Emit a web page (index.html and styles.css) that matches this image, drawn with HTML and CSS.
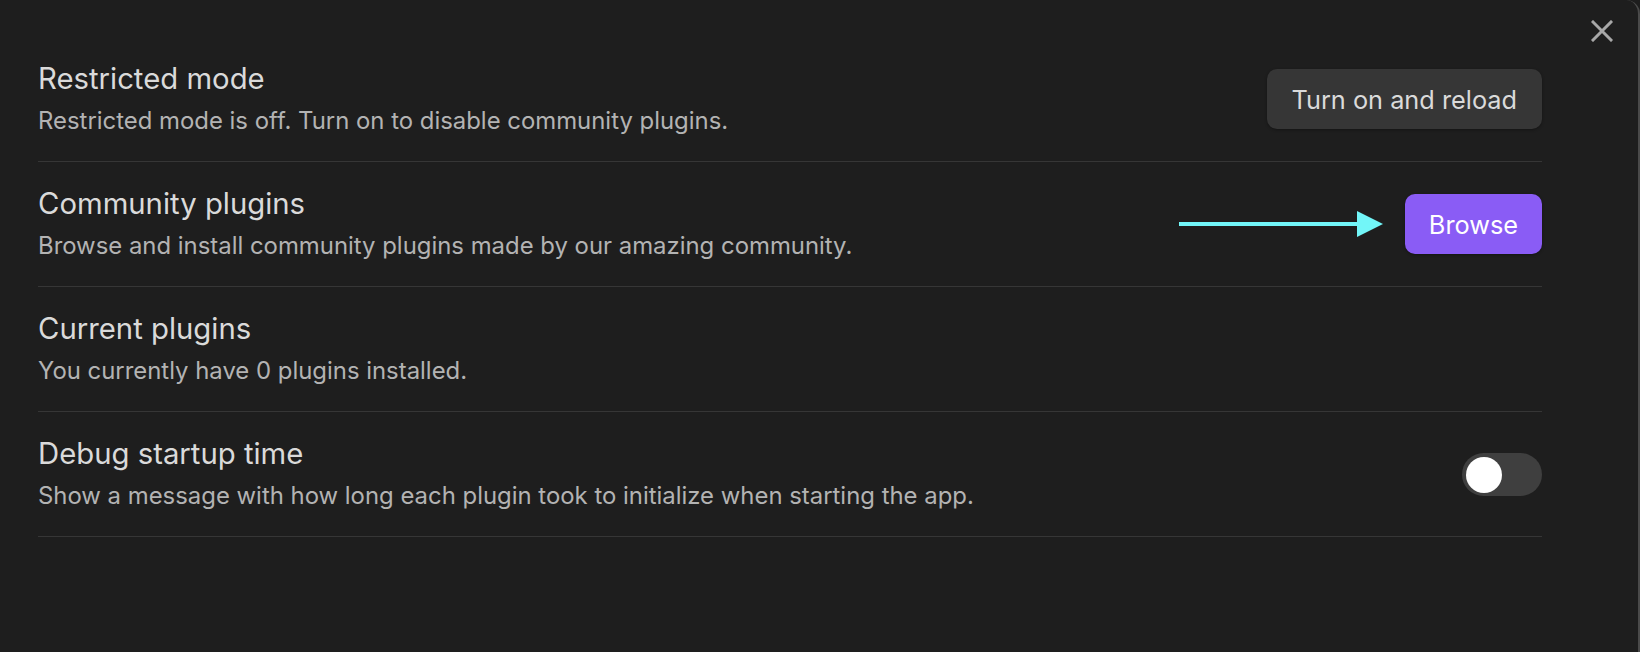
FILE: index.html
```html
<!DOCTYPE html>
<html lang="en">
<head>
<meta charset="utf-8">
<title>Community plugins</title>
<link rel="stylesheet" href="styles.css">
</head>
<body>
<div class="modal">
  <button class="close" aria-label="Close">
    <svg width="22" height="22" viewBox="0 0 22 22"><path d="M2 2 L20 20 M20 2 L2 20" stroke="currentColor" stroke-width="3" stroke-linecap="square" fill="none"/></svg>
  </button>
  <div class="settings">
    <div class="item">
      <div class="info">
        <div class="name">Restricted mode</div>
        <div class="desc">Restricted mode is off. Turn on to disable community plugins.</div>
      </div>
      <div class="control">
        <button class="btn">Turn on and reload</button>
      </div>
    </div>
    <div class="item">
      <div class="info">
        <div class="name">Community plugins</div>
        <div class="desc">Browse and install community plugins made by our amazing community.</div>
      </div>
      <div class="control">
        <svg class="arrow" width="204" height="26" viewBox="0 0 204 26"><rect x="0" y="11" width="182" height="4" fill="#72f6f8"/><polygon points="178,0 204,13 178,26" fill="#72f6f8"/></svg>
        <button class="btn btn-accent">Browse</button>
      </div>
    </div>
    <div class="item">
      <div class="info">
        <div class="name">Current plugins</div>
        <div class="desc">You currently have 0 plugins installed.</div>
      </div>
    </div>
    <div class="item">
      <div class="info">
        <div class="name">Debug startup time</div>
        <div class="desc">Show a message with how long each plugin took to initialize when starting the app.</div>
      </div>
      <div class="control">
        <div class="toggle"><span class="knob"></span></div>
      </div>
    </div>
  </div>
</div>
</body>
</html>
```

FILE: styles.css
```css
html, body {
  margin: 0;
  padding: 0;
  background: #1e1e1e;
}
body {
  font-family: Inter, "Noto Sans", "Liberation Sans", sans-serif;
  -webkit-font-smoothing: antialiased;
}
.modal {
  position: relative;
  box-sizing: border-box;
  min-height: 100vh;
  background: #1e1e1e;
  border-right: 2px solid #4a4a4a;
  border-top-right-radius: 14px;
}
.close {
  position: absolute;
  top: 20px;
  right: 25px;
  width: 22px;
  height: 22px;
  padding: 0;
  border: 0;
  background: none;
  color: #a8a8a8;
  display: flex;
}
.settings {
  padding: 37px 96px 0 38px;
}
.item {
  display: flex;
  align-items: center;
  padding: 24px 0;
  border-bottom: 1px solid #363636;
}
.info {
  flex: 1;
}
.name {
  font-size: 29.3px;
  line-height: 36px;
  color: #dadada;
}
.desc {
  margin-top: 8px;
  font-size: 23.9px;
  line-height: 32px;
  color: #b3b3b3;
}
.control {
  display: flex;
  align-items: center;
  gap: 22px;
}
.btn {
  font-family: Inter, "Noto Sans", sans-serif;
  font-size: 25.3px;
  height: 60px;
  padding: 0 25px;
  border: 0;
  border-radius: 10px;
  background: #363636;
  color: #dadada;
  box-shadow: 0 1px 3px rgba(0,0,0,0.35);
}
.btn-accent {
  background: #8a5cf5;
  color: #ffffff;
  padding: 0 24px;
}
.arrow {
  display: block;
}
.toggle {
  position: relative;
  width: 80px;
  height: 43px;
  border-radius: 22px;
  background: #3f3f3f;
}
.knob {
  position: absolute;
  left: 4px;
  top: 4px;
  width: 36px;
  height: 36px;
  border-radius: 50%;
  background: #ffffff;
}
```
